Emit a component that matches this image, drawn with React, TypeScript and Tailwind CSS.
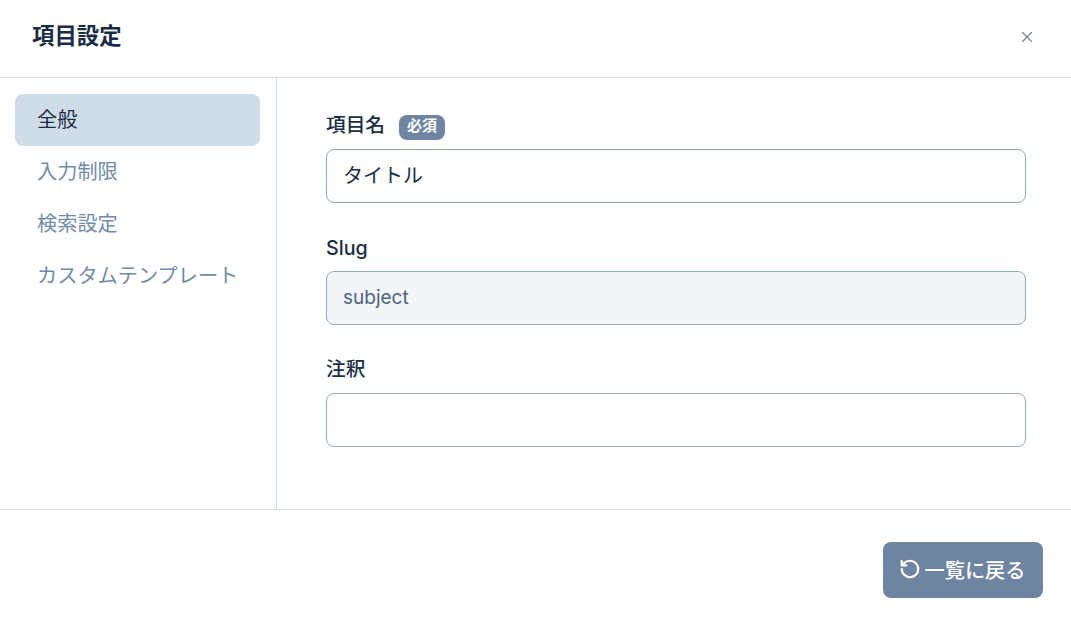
import { RotateCcw, X } from "lucide-react";

const tabs = ["全般", "入力制限", "検索設定", "カスタムテンプレート"];

export default function App() {
  return (
    <div className="h-[626px] w-[1071px] bg-white text-[#1a2b44] flex flex-col overflow-hidden font-['Inter','Noto_Sans_CJK_JP',sans-serif]">
      <header className="h-[78px] shrink-0 border-b border-[#d5dee9] flex items-center justify-between pl-8 pr-[35px]">
        <h1 className="text-[22.4px] font-bold text-[#1a2b44] -mt-[5px]">項目設定</h1>
        <X className="w-[18px] h-[18px] text-[#718096] -mt-1" strokeWidth={1.5} />
      </header>

      <div className="flex h-[432px] shrink-0 border-b border-[#d9dfe7]">
        <nav className="w-[277px] shrink-0 border-r border-[#cbd9e8] pl-[15px] pr-4 pt-4 flex flex-col">
          {tabs.map((tab, i) => (
            <div
              key={tab}
              className={
                i === 0
                  ? "h-[52px] rounded-lg bg-[#d1dce9] pl-[22px] flex items-center whitespace-nowrap text-[20.2px] text-[#1a2b44]"
                  : "h-[52px] rounded-lg pl-[22px] flex items-center whitespace-nowrap text-[20.2px] text-[#718ba8]"
              }
            >
              {tab}
            </div>
          ))}
        </nav>

        <main className="flex-1 pl-[49px] pr-[45px] pt-[30px]">
          <div className="flex items-center h-[30px] mb-[11px]">
            <label className="text-[19.7px] font-medium pt-[6px]">項目名</label>
            <span className="ml-[14px] mt-[8px] pb-[1px] h-[25px] w-[46px] justify-center rounded-lg bg-[#6f84a1] text-white text-[15px] font-semibold flex items-center">
              必須
            </span>
          </div>
          <div className="h-[54px] rounded-lg border border-[#94a9c6] pl-4 flex items-center text-[20px]">
            タイトル
          </div>

          <label className="block text-[19.7px] font-medium h-[30px] mt-[27px] mb-[11px] pt-[4px]">Slug</label>
          <div className="h-[54px] rounded-lg border border-[#94a9c6] bg-[#f4f5f9] pl-4 flex items-center text-[19px] text-[#4f6382]">
            subject
          </div>

          <label className="block text-[19.7px] font-medium h-[30px] mt-[27px] mb-[11px] pt-[3px]">注釈</label>
          <div className="h-[54px] rounded-lg border border-[#94a9c6]" />
        </main>
      </div>

      <footer className="flex-1 flex items-start justify-end pt-8 pr-7">
        <button className="h-14 w-40 pt-[2px] pr-[2px] rounded-lg bg-[#6f84a1] text-white text-[20.2px] font-medium flex items-center justify-center gap-[4px]">
          <RotateCcw className="w-[22px] h-[22px] -mt-[4px]" strokeWidth={2.4} />
          一覧に戻る
        </button>
      </footer>
    </div>
  );
}
